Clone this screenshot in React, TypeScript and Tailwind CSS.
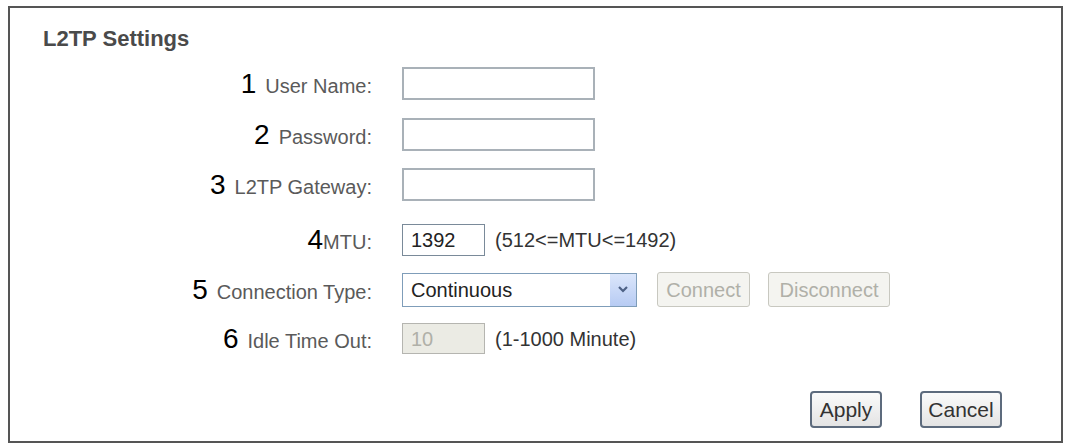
const font = { fontFamily: '"Liberation Sans", Arial, sans-serif' };

type RowProps = {
  num: string;
  label: string;
  gap?: boolean;
  top: string;
  children: React.ReactNode;
};

function Row({ num, label, gap = true, top, children }: RowProps) {
  return (
    <div className={`grid grid-cols-[362px_1fr] gap-x-[30px] h-[33px] items-center ${top}`}>
      <div className="flex items-baseline justify-end leading-none">
        <span className="text-[28px] text-black">{num}</span>
        <span className={`text-[20px] text-[#5a5a5a] ${gap ? "ml-[9px]" : ""}`}>{label}</span>
      </div>
      <div className="flex items-center h-full">{children}</div>
    </div>
  );
}

function TextBox() {
  return <div className="w-[193px] h-[33px] border-2 border-[#a9b1b8] bg-white" />;
}

export default function App() {
  return (
    <div className="min-h-screen bg-white" style={font}>
      <div className="ml-2 mt-[6px] w-[1055px] h-[437px] border-2 border-[#555] bg-white">
        <h2 className="pl-[33px] pt-[19px] text-[22px] font-bold text-[#4a4a4a] leading-[24px]">
          L2TP Settings
        </h2>

        <Row num="1" label="User Name:" top="mt-[16px]">
          <TextBox />
        </Row>
        <Row num="2" label="Password:" top="mt-[18px]">
          <TextBox />
        </Row>
        <Row num="3" label="L2TP Gateway:" top="mt-[17px]">
          <TextBox />
        </Row>
        <Row num="4" label="MTU:" gap={false} top="mt-[22px]">
          <div className="w-[83px] h-[32px] border border-[#7a8a99] bg-white flex items-center pl-[8px] text-[20px] text-[#222]">
            1392
          </div>
          <span className="ml-[10px] text-[20px] text-[#333]">(512&lt;=MTU&lt;=1492)</span>
        </Row>
        <Row num="5" label="Connection Type:" top="mt-[16px]">
          <div className="w-[235px] h-[34px] border border-[#7f9db9] bg-white flex items-center justify-between">
            <span className="pl-[8px] text-[20px] text-[#222]">Continuous</span>
            <div className="w-[26px] h-full bg-gradient-to-b from-[#dbe6fb] to-[#b7cbf3] flex items-center justify-center">
              <svg width="12" height="9" viewBox="0 0 12 9">
                <path d="M2 2 L6 6 L10 2" fill="none" stroke="#4d6185" strokeWidth="2.2" />
              </svg>
            </div>
          </div>
          <button className="ml-[20px] w-[93px] h-[35px] border border-[#c8c8c0] rounded-[3px] bg-[#f4f4f0] text-[20px] text-[#b0b0a8]">
            Connect
          </button>
          <button className="ml-[18px] w-[122px] h-[35px] border border-[#c8c8c0] rounded-[3px] bg-[#f4f4f0] text-[20px] text-[#b0b0a8]">
            Disconnect
          </button>
        </Row>
        <Row num="6" label="Idle Time Out:" top="mt-[17px]">
          <div className="w-[83px] h-[31px] border border-[#b5b5b0] bg-[#ebebe4] flex items-center pl-[8px] text-[20px] text-[#b0b0a8]">
            10
          </div>
          <span className="ml-[10px] text-[20px] text-[#333]">(1-1000 Minute)</span>
        </Row>

        <div className="flex justify-end gap-[38px] pr-[59px] mt-[36px]">
          <button className="w-[72px] h-[37px] border-2 border-[#5d6b7d] rounded-[4px] bg-gradient-to-b from-[#fafafa] to-[#e4e4e4] text-[21px] text-[#333]">
            Apply
          </button>
          <button className="w-[82px] h-[37px] border-2 border-[#5d6b7d] rounded-[4px] bg-gradient-to-b from-[#fafafa] to-[#e4e4e4] text-[21px] text-[#333]">
            Cancel
          </button>
        </div>
      </div>
    </div>
  );
}
